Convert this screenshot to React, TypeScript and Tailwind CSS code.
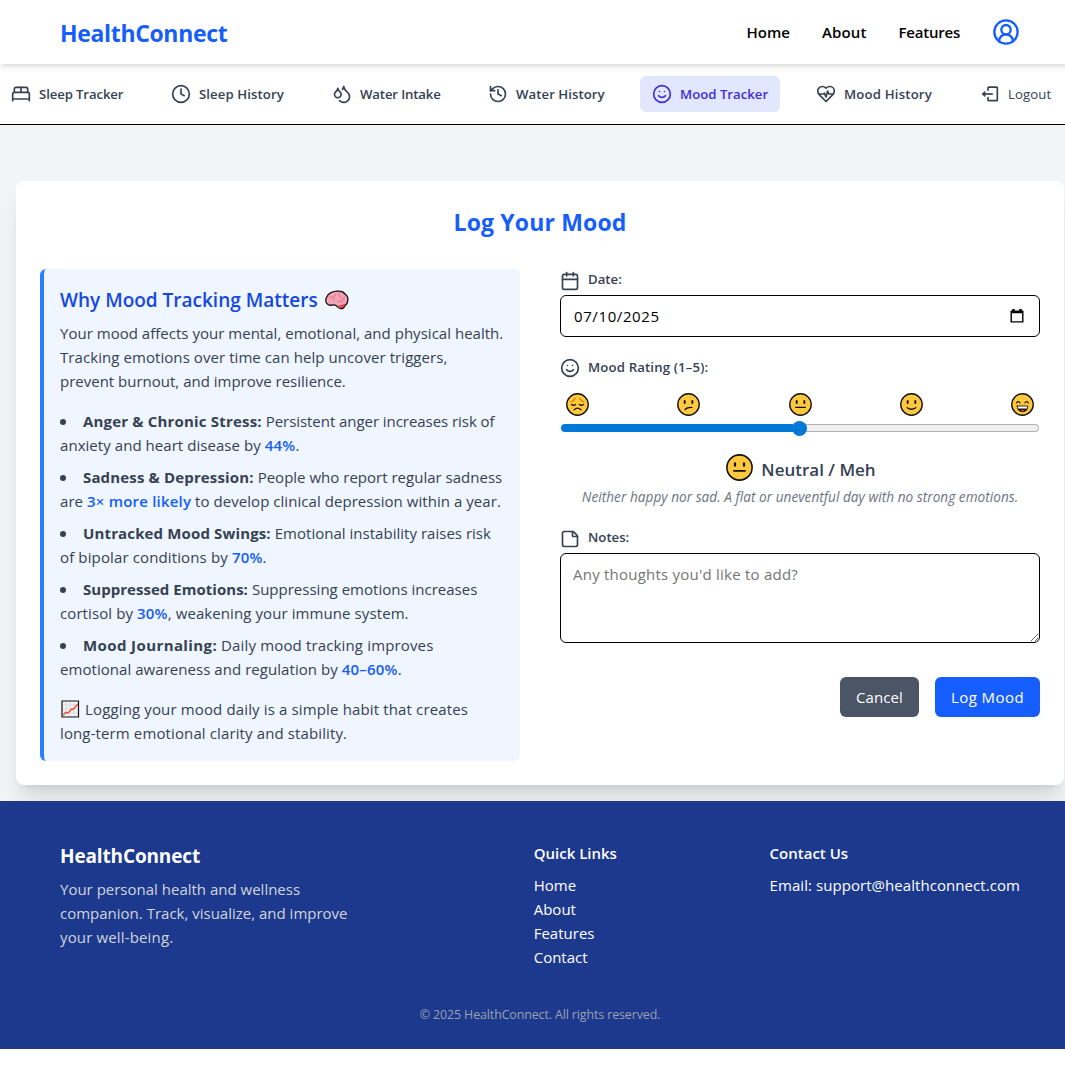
import React from "react";
import { BedDouble, Clock, Droplets, History, Smile, CircleUserRound, Calendar, StickyNote } from "lucide-react";

const faces: Record<string, React.ReactNode> = {
  sad: (
    <>
      <path d="M5.5 9.2q3-.8 4-3.5M18.5 9.2q-3-.8-4-3.5" stroke="#d98200" />
      <path d="M5.8 12q2 1.5 4.2 0M14 12q2 1.5 4.2 0" />
      <path d="M8.5 17.5q3.5-3.4 7 0" />
    </>
  ),
  confused: (
    <>
      <path d="M8 8.4v2M16 8.4v2" strokeWidth="2" />
      <path d="M8.5 17.2q2-2.4 7-2.2" />
    </>
  ),
  neutral: (
    <>
      <path d="M8 8.4v2M16 8.4v2" strokeWidth="2" />
      <path d="M7 15h10" />
    </>
  ),
  happy: (
    <>
      <path d="M8 8.4v2M16 8.4v2" strokeWidth="2" />
      <path d="M7.5 15.4q4.5 3.2 9 0" />
    </>
  ),
  grin: (
    <>
      <path d="M5.6 10.4q2-2.8 4 0M14.4 10.4q2-2.8 4 0" strokeWidth="1.1" />
      <path d="M6.5 13.5h11q0 6-5.5 6t-5.5-6z" fill="#111" strokeWidth=".8" />
      <path d="M7.2 14h9.6v2.2H7.2z" fill="#fff" stroke="none" />
      <path d="M9.8 18.4q2.2-1.8 4.4 0-2.2 1.2-4.4 0z" fill="#e53935" stroke="none" />
    </>
  ),
};

function Face({ kind, className }: { kind: string; className: string }) {
  return (
    <svg viewBox="0 0 24 24" className={className} fill="none" stroke="#111" strokeWidth="1.4" strokeLinecap="round">
      <circle cx="12" cy="12" r="11.2" fill="#ffc83d" />
      {faces[kind]}
    </svg>
  );
}

function HeartPulse({ className }: { size?: number; className?: string }) {
  return (
    <svg viewBox="0 0 24 24" className={`size-5 ${className ?? ""}`} fill="none" stroke="currentColor" strokeWidth="2" strokeLinecap="round" strokeLinejoin="round">
      <path d="M19 14c1.49-1.46 3-3.21 3-5.5A5.5 5.5 0 0 0 16.5 3c-1.76 0-3 .5-4.5 2-1.5-1.5-2.74-2-4.5-2A5.5 5.5 0 0 0 2 8.5c0 2.3 1.5 4.05 3 5.5l7 7Z" />
      <path d="M3.22 12H9.5l.5-1 2 4.5 2-7 1.5 3.5h5.27" />
    </svg>
  );
}

const tabs = [
  { label: "Sleep Tracker", Icon: BedDouble, w: "w-[136px] tracking-[-0.12px]" },
  { label: "Sleep History", Icon: Clock, w: "w-[137px] tracking-[0.08px]" },
  { label: "Water Intake", Icon: Droplets, w: "w-[132px] tracking-[-0.15px]" },
  { label: "Water History", Icon: History, w: "w-[140px] tracking-[0.05px]" },
  { label: "Mood Tracker", Icon: Smile, w: "w-[140px]", active: true },
  { label: "Mood History", Icon: HeartPulse, w: "w-[140px] tracking-[0.17px]" },
];

const B = ({ children, t = "tracking-[0.18px]" }: { children: React.ReactNode; t?: string }) => (
  <strong className={`font-bold ${t}`}>{children}</strong>
);
const H = ({ children }: { children: React.ReactNode }) => (
  <span className="font-semibold tracking-[0.2px] text-blue-600">{children}</span>
);

const facts = [
  [<><B>Anger &amp; Chronic Stress:</B> <span className="tracking-[-0.05px]">Persistent anger increases risk of</span></>, <>anxiety and heart disease by <H>44%</H>.</>],
  [<><B t="tracking-[0.15px]">Sadness &amp; Depression:</B> <span className="tracking-[0.01px]">People who report regular sadness</span></>, <>are <H>3× more likely</H> to develop clinical depression within a year.</>],
  [<><B t="tracking-[0.14px]">Untracked Mood Swings:</B> <span className="tracking-[0.02px]">Emotional instability raises risk</span></>, <span className="tracking-[0.13px]">of bipolar conditions by <H>70%</H>.</span>],
  [<><B t="tracking-[0.03px]">Suppressed Emotions:</B> <span className="tracking-[0.01px]">Suppressing emotions increases</span></>, <span className="tracking-[0.09px]">cortisol by <H>30%</H>, weakening your immune system.</span>],
  [<><B t="tracking-[0.4px]">Mood Journaling:</B> <span className="tracking-[0.15px]">Daily mood tracking improves</span></>, <>emotional awareness and regulation by <H>40–60%</H>.</>],
];

export default function App() {
  return (
    <div className="w-full overflow-hidden bg-white font-['Open_Sans','Noto_Sans',sans-serif] text-[15px] leading-6">
      <div className="w-[1080px]">
        <header className="relative z-10 flex h-16 items-center justify-between bg-white pr-[60px] pl-[60px] shadow-md">
          <div className="pt-px text-[23px] leading-8 font-bold tracking-[-0.34px] text-blue-600">HealthConnect</div>
          <nav className="flex items-center gap-8 font-semibold text-black">
            <span>Home</span>
            <span className="tracking-[0.15px]">About</span>
            <span className="tracking-[-0.22px]">Features</span>
            <CircleUserRound size={28} className="text-blue-600" />
          </nav>
        </header>

        <nav className="flex h-[61px] items-center gap-6 border-b border-black bg-white text-[13.2px] whitespace-nowrap text-gray-700">
          <div className="-ml-px flex gap-6">
            {tabs.map(({ label, Icon, w, active }) => (
              <div key={label} className={`flex h-9 items-center gap-2 rounded-md px-3 font-semibold ${w} ${active ? "bg-indigo-100 text-indigo-700" : ""}`}>
                <Icon size={20} className="shrink-0" />
                <span>{label}</span>
              </div>
            ))}
            <div className="flex h-9 items-center gap-2 px-3 tracking-[0.1px]">
              <svg viewBox="0 0 24 24" className="size-5" fill="none" stroke="currentColor" strokeWidth="2" strokeLinejoin="round">
                <path d="M9.6 8.2V4.6q0-.8.8-.8h9.6q.8 0 .8.8v14.6q0 .8-.8.8h-9.6q-.8 0-.8-.8v-3.6" />
                <path d="M15.4 12H4.4" />
                <path d="M6 9 2.4 12 6 15z" fill="currentColor" strokeWidth="1" />
              </svg>
              <span>Logout</span>
            </div>
          </div>
        </nav>

        <main className="bg-gray-100 px-4 pt-14 pb-4">
          <section className="h-[604px] rounded-lg bg-white p-6 shadow-xl">
            <h2 className="text-center text-[23px] leading-8 font-bold tracking-[0.15px] text-blue-600">
              <span className="block pt-px">Log Your Mood</span>
            </h2>
            <div className="mt-[31px] flex gap-10">
              <div className="h-[492px] w-[480px] rounded-md border-l-4 border-blue-500 bg-blue-50 p-4 whitespace-nowrap text-gray-700">
                <h3 className="flex h-7 items-center gap-2 pt-0.5 text-[19px] font-semibold text-blue-700">
                  Why Mood Tracking Matters
                  <svg viewBox="0 0 24 20" className="-ml-px h-5 w-6" strokeLinejoin="round" strokeLinecap="round">
                    <path d="M1.4 13Q.2 10.4 1.4 7.6 2.6 4 6 2.6 10 .6 14 1.2q4 0 6 2.8 3.4 2.4 2.8 6.4-.2 3.6-2.6 5-1.6 3.6-4.6 3.2-2.4-.2-4-2.6-1.6-1.4-4-.9-4.6.8-6.2-2.1z" fill="#f4a3b5" stroke="#111" strokeWidth="1.3" />
                    <path d="M12.6 15.4q4.6.4 6.8-1.6l1 .8q-1.8 3.6-4.4 3.4-2.2-.4-3.4-2.6z" fill="#e8384f" />
                    <path d="M5 7q4 0 4 3M8.4 7.4q2.6-1 2.4-3.4M14 3q-1 3 2 4M20 7q-2 0-3 3M13 11q3 2 5 0" fill="none" stroke="#e0748f" strokeWidth="1" />
                  </svg>
                </h3>
                <p className="mt-2">
                  <span className="tracking-[0.02px]">Your mood affects your mental, emotional, and physical health.</span><br />
                  <span className="tracking-[0.07px]">Tracking emotions over time can help uncover triggers,</span><br />
                  prevent burnout, and improve resilience.
                </p>
                <ul className="mt-4 flex flex-col gap-2 tracking-[0.05px]">
                  {facts.map(([a, b], i) => (
                    <li key={i}>
                      <div className="flex items-center">
                        <span className="mt-px mr-[17px] size-1.5 rounded-full bg-gray-700" />
                        <span>{a}</span>
                      </div>
                      <div>{b}</div>
                    </li>
                  ))}
                </ul>
                <div className="mt-4">
                  <div className="flex items-center gap-[5px]">
                    <svg viewBox="0 0 20 20" className="size-5" fill="none">
                      <path d="M2 2h16.5v16H2z" fill="#f3f3f3" stroke="#111" strokeWidth="1.2" />
                      <path d="M6 3v14M10 3v14M14 3v14M3 6h15M3 10h15M3 14h15" stroke="#ccc" strokeWidth=".6" />
                      <path d="M3 16l3-2.8 2 .8 3.8-4 1.5.3L18 5" stroke="#f0432b" strokeWidth="1.3" />
                    </svg>
                    <span className="tracking-[0.14px]">Logging your mood daily is a simple habit that creates</span>
                  </div>
                  <div className="tracking-[0.12px]">long-term emotional clarity and stability.</div>
                </div>
              </div>

              <div className="w-[480px] text-gray-700">
                <label className="flex h-[26px] gap-2 text-[13.2px] leading-5 font-semibold">
                  <Calendar size={20} className="mt-0.5" />
                  Date:
                </label>
                <div className="flex h-[42px] items-center justify-between rounded-md border border-black px-3 text-black">
                  <span className="pl-px tracking-[0.6px]">07/10/2025</span>
                  <svg viewBox="0 0 14 14" className="mr-[3px] size-3.5" fill="none" stroke="#000">
                    <path d="M1.2 2.5h11.6v10.4H1.2z" strokeWidth="1.4" />
                    <path d="M1 3h12M3.5 0v2M10.5 0v2" strokeWidth="2.6" />
                  </svg>
                </div>
                <label className="mt-5 flex h-6 gap-2 text-[13.2px] leading-5 font-semibold tracking-[0.15px]">
                  <Smile size={20} className="mt-px" />
                  Mood Rating (1–5):
                </label>
                <div className="mt-[11px] mb-px flex h-6 items-center justify-between px-1.5">
                  <Face kind="sad" className="size-[23px]" />
                  <Face kind="confused" className="size-[23px]" />
                  <Face kind="neutral" className="size-[23px]" />
                  <Face kind="happy" className="size-[23px]" />
                  <Face kind="grin" className="size-[23px]" />
                </div>
                <div className="flex h-[22px] items-center px-px">
                  <div className="h-2 w-[232px] rounded-l-full bg-[#0078d7]" />
                  <div className="z-10 -mx-px size-[15px] rounded-full bg-[#0078d7]" />
                  <div className="-ml-1 h-2 flex-1 rounded-r-full border border-l-0 border-[#b2b2b2] bg-[#efefef]" />
                </div>
                <div className="mt-3 flex h-8 items-center justify-center gap-2 pl-0.5 text-[17px] font-semibold">
                  <Face kind="neutral" className="size-[27px]" />
                  <span className="pt-1.5">Neutral / Meh</span>
                </div>
                <p className="mt-1 text-center text-[13.6px] leading-5 tracking-[0.04px] text-gray-500 italic">Neither happy nor sad. A flat or uneventful day with no strong emotions.</p>
                <label className="mt-5 flex h-[26px] gap-2 text-[13.2px] leading-5 font-semibold">
                  <StickyNote size={20} className="mt-0.5" />
                  Notes:
                </label>
                <textarea className="block h-[90px] w-full rounded-md border border-black px-3 py-2 tracking-[0.23px] placeholder:text-[#757575]" placeholder="Any thoughts you'd like to add?" />
                <div className="mt-[34px] flex justify-end gap-4 text-white">
                  <button className="h-10 w-[79px] rounded-md bg-gray-600 tracking-[0.1px]">Cancel</button>
                  <button className="h-10 w-[105px] rounded-md bg-blue-600 tracking-[0.45px]">Log Mood</button>
                </div>
              </div>
            </div>
          </section>
        </main>

        <footer className="h-[248px] bg-[#1c398e] px-[60px] pt-10 whitespace-nowrap text-white">
          <div className="flex h-[152px]">
            <div className="w-[474px]">
              <div className="h-7 text-[19px] leading-[30px] font-bold tracking-[-0.14px]">HealthConnect</div>
              <p className="mt-2 text-gray-300">
                Your personal health and wellness<br />
                companion. Track, visualize, and improve<br />
                <span className="tracking-[0.15px]">your well-being.</span>
              </p>
            </div>
            <div className="w-[236px]">
              <div className="font-semibold">Quick Links</div>
              <div className="mt-2">Home<br />About<br />Features<br />Contact</div>
            </div>
            <div>
              <div className="font-semibold">Contact Us</div>
              <div className="mt-2 tracking-[0.06px]">Email: support@healthconnect.com</div>
            </div>
          </div>
          <div className="pt-3 text-center text-[12.4px] leading-5 tracking-[-0.1px] text-gray-400">© 2025 HealthConnect. All rights reserved.</div>
        </footer>
        <div className="h-[39px]" />
      </div>
    </div>
  );
}
